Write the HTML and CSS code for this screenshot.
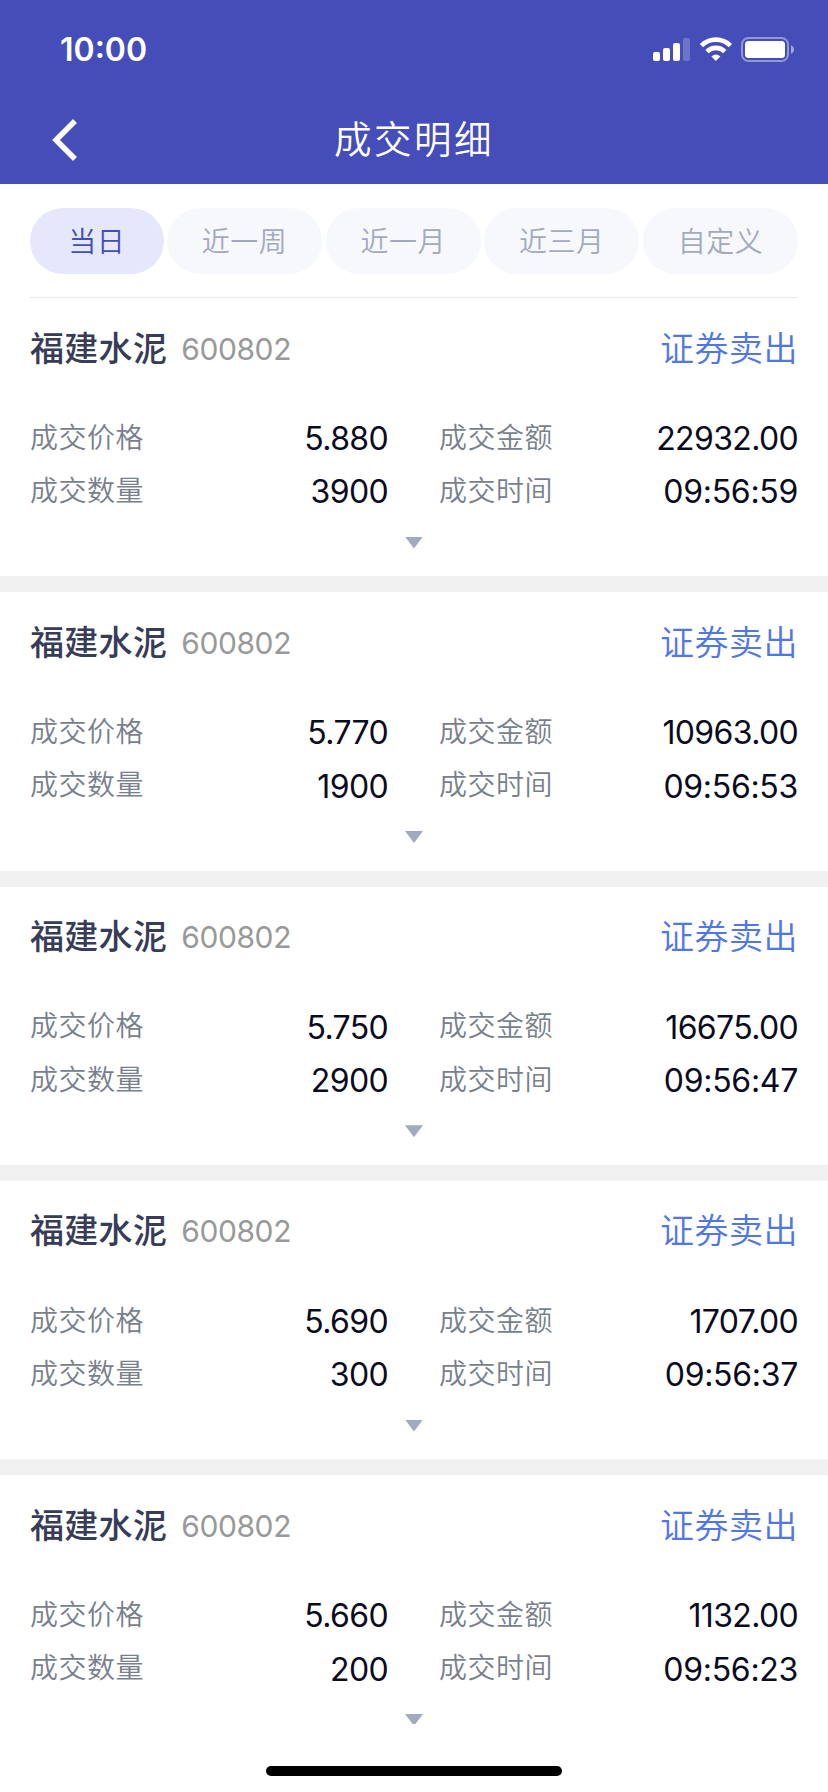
FILE: index.html
```html
<!DOCTYPE html>
<html lang="zh-CN">
<head>
<meta charset="utf-8">
<title>成交明细</title>
<link rel="stylesheet" href="styles.css">
</head>
<body>
<div class="screen">
  <header class="header">
    <div class="status">
      <span class="clock">10:00</span>
      <svg class="status-icons" width="144" height="28" viewBox="0 0 144 28" fill="#fff">
        <rect x="1" y="16" width="7" height="9" rx="2"/>
        <rect x="11" y="12" width="7" height="13" rx="2"/>
        <rect x="21" y="7" width="7" height="18" rx="2"/>
        <rect x="31" y="2" width="7" height="23" rx="2" opacity=".22"/>
        <g fill="none" stroke="#fff" stroke-width="4.6">
          <path d="M49.400 9.6a20.5 20.5 0 0 1 29 0"/>
          <path d="M55 15.6a12.6 12.6 0 0 1 17.8 0"/>
        </g>
        <path d="M63.900 25l-4.500-4.600q4.500-3.600 9 0z"/>
        <rect x="90" y="2" width="46" height="23" rx="6.500" fill="none" stroke="#fff" stroke-width="2" opacity=".42"/>
        <rect x="93" y="5" width="40" height="17" rx="3.500"/>
        <path d="M139 9.200q3 1.300 3 4.300t-3 4.300z" opacity=".5"/>
      </svg>
    </div>
    <div class="nav">
      <svg class="back" width="28" height="44" viewBox="0 0 28 44" fill="none" stroke="#fff" stroke-width="5.500"><path d="M24 3L5 22l19 19"/></svg>
      <h1 class="title">成交明细</h1>
    </div>
  </header>
  <main class="content">
    <nav class="tabs">
      <span class="tab tab-active">当日</span><span class="tab">近一周</span><span class="tab">近一月</span><span class="tab">近三月</span><span class="tab">自定义</span>
    </nav>
    <section class="deal">
      <div class="deal-head"><b class="name">福建水泥</b><span class="code">600802</span><span class="side">证券卖出</span></div>
      <dl class="facts">
        <dt>成交价格</dt><dd>5.880</dd><dt>成交金额</dt><dd>22932.00</dd>
        <dt>成交数量</dt><dd>3900</dd><dt>成交时间</dt><dd class="time">09:56:59</dd>
      </dl>
      <i class="more"></i>
    </section>
    <section class="deal">
      <div class="deal-head"><b class="name">福建水泥</b><span class="code">600802</span><span class="side">证券卖出</span></div>
      <dl class="facts">
        <dt>成交价格</dt><dd>5.770</dd><dt>成交金额</dt><dd>10963.00</dd>
        <dt>成交数量</dt><dd>1900</dd><dt>成交时间</dt><dd class="time">09:56:53</dd>
      </dl>
      <i class="more"></i>
    </section>
    <section class="deal">
      <div class="deal-head"><b class="name">福建水泥</b><span class="code">600802</span><span class="side">证券卖出</span></div>
      <dl class="facts">
        <dt>成交价格</dt><dd>5.750</dd><dt>成交金额</dt><dd>16675.00</dd>
        <dt>成交数量</dt><dd>2900</dd><dt>成交时间</dt><dd class="time">09:56:47</dd>
      </dl>
      <i class="more"></i>
    </section>
    <section class="deal">
      <div class="deal-head"><b class="name">福建水泥</b><span class="code">600802</span><span class="side">证券卖出</span></div>
      <dl class="facts">
        <dt>成交价格</dt><dd>5.690</dd><dt>成交金额</dt><dd>1707.00</dd>
        <dt>成交数量</dt><dd>300</dd><dt>成交时间</dt><dd class="time">09:56:37</dd>
      </dl>
      <i class="more"></i>
    </section>
    <section class="deal">
      <div class="deal-head"><b class="name">福建水泥</b><span class="code">600802</span><span class="side">证券卖出</span></div>
      <dl class="facts">
        <dt>成交价格</dt><dd>5.660</dd><dt>成交金额</dt><dd>1132.00</dd>
        <dt>成交数量</dt><dd>200</dd><dt>成交时间</dt><dd class="time">09:56:23</dd>
      </dl>
      <i class="more"></i>
    </section>
  </main>
  <footer class="home"><div class="home-bar"></div></footer>
</div>
</body>
</html>
```
FILE: styles.css
```css
* { box-sizing: border-box; }
body { margin: 0; background: #fff; font-family: Inter, "Noto Sans CJK SC", sans-serif; }
.screen { width: 828px; height: 1792px; display: flex; flex-direction: column; overflow: hidden; }

.header { height: 184px; flex: none; background: #454db8; color: #fff; }
.status { height: 96px; padding: 0 32px 0 60px; display: flex; justify-content: space-between; }
.clock { font-size: 32px; font-weight: 600; line-height: 40px; margin-top: 30px; }
.status-icons { margin-top: 36px; }
.nav { height: 88px; display: grid; grid-template-columns: 100px 1fr 100px; align-items: center; }
.back { margin-left: 51px; }
.title { margin: 0; font-size: 37.500px; font-weight: 350; letter-spacing: 2.500px; text-align: center; line-height: 56px; }

.content { height: 1540px; flex: none; overflow: hidden; }
.tabs { height: 114px; margin: 0 30px; padding-top: 24px; display: flex; justify-content: space-between; align-items: flex-start; border-bottom: 1px solid #e8e8e8; }
.tab { width: 155px; height: 66px; border-radius: 33px; background: #f6f8fc; color: #a3aabf; font-size: 28px; font-weight: 350; letter-spacing: .5px; line-height: 68px; text-align: center; }
.tab-active { width: 133.500px; background: #e5e8fd; color: #454db8; }

.deal { height: 294.330px; padding: 26px 30px 0; border-bottom: 16px solid #f1f1f1; }
.deal-head { height: 48px; display: flex; align-items: center; }
.name { font-size: 34px; font-weight: 500; color: #373c57; letter-spacing: .3px; margin-top: -4px; }
.code { margin-left: 14px; font-size: 30px; color: #999; letter-spacing: -.4px; padding-top: 1px; }
.side { margin-left: auto; margin-top: -4px; font-size: 34px; font-weight: 350; color: #5176e6; letter-spacing: .5px; }
.facts { margin: 40px 0 0; display: grid; grid-template-columns: 140px 218px 166px 1fr; grid-auto-rows: 53.300px; align-items: center; }
.facts dt { font-size: 28px; font-weight: 350; color: #797f8c; letter-spacing: .5px; padding-bottom: 6px; }
.facts dt:nth-of-type(even) { padding-left: 51px; }
.facts dd { margin: 0; font-size: 32px; color: #0b0b1e; text-align: right; letter-spacing: -.65px; }
.facts .time { letter-spacing: -.3px; }
.more { display: block; width: 18px; height: 12px; margin: 18px auto 0; background: #a3aabf; clip-path: polygon(0 0, 100% 0, 50% 100%); }

.home { height: 68px; padding-top: 42px; background: #fff; }
.home-bar { width: 296px; height: 10px; margin: 0 auto; border-radius: 5px; background: #000; }
```
